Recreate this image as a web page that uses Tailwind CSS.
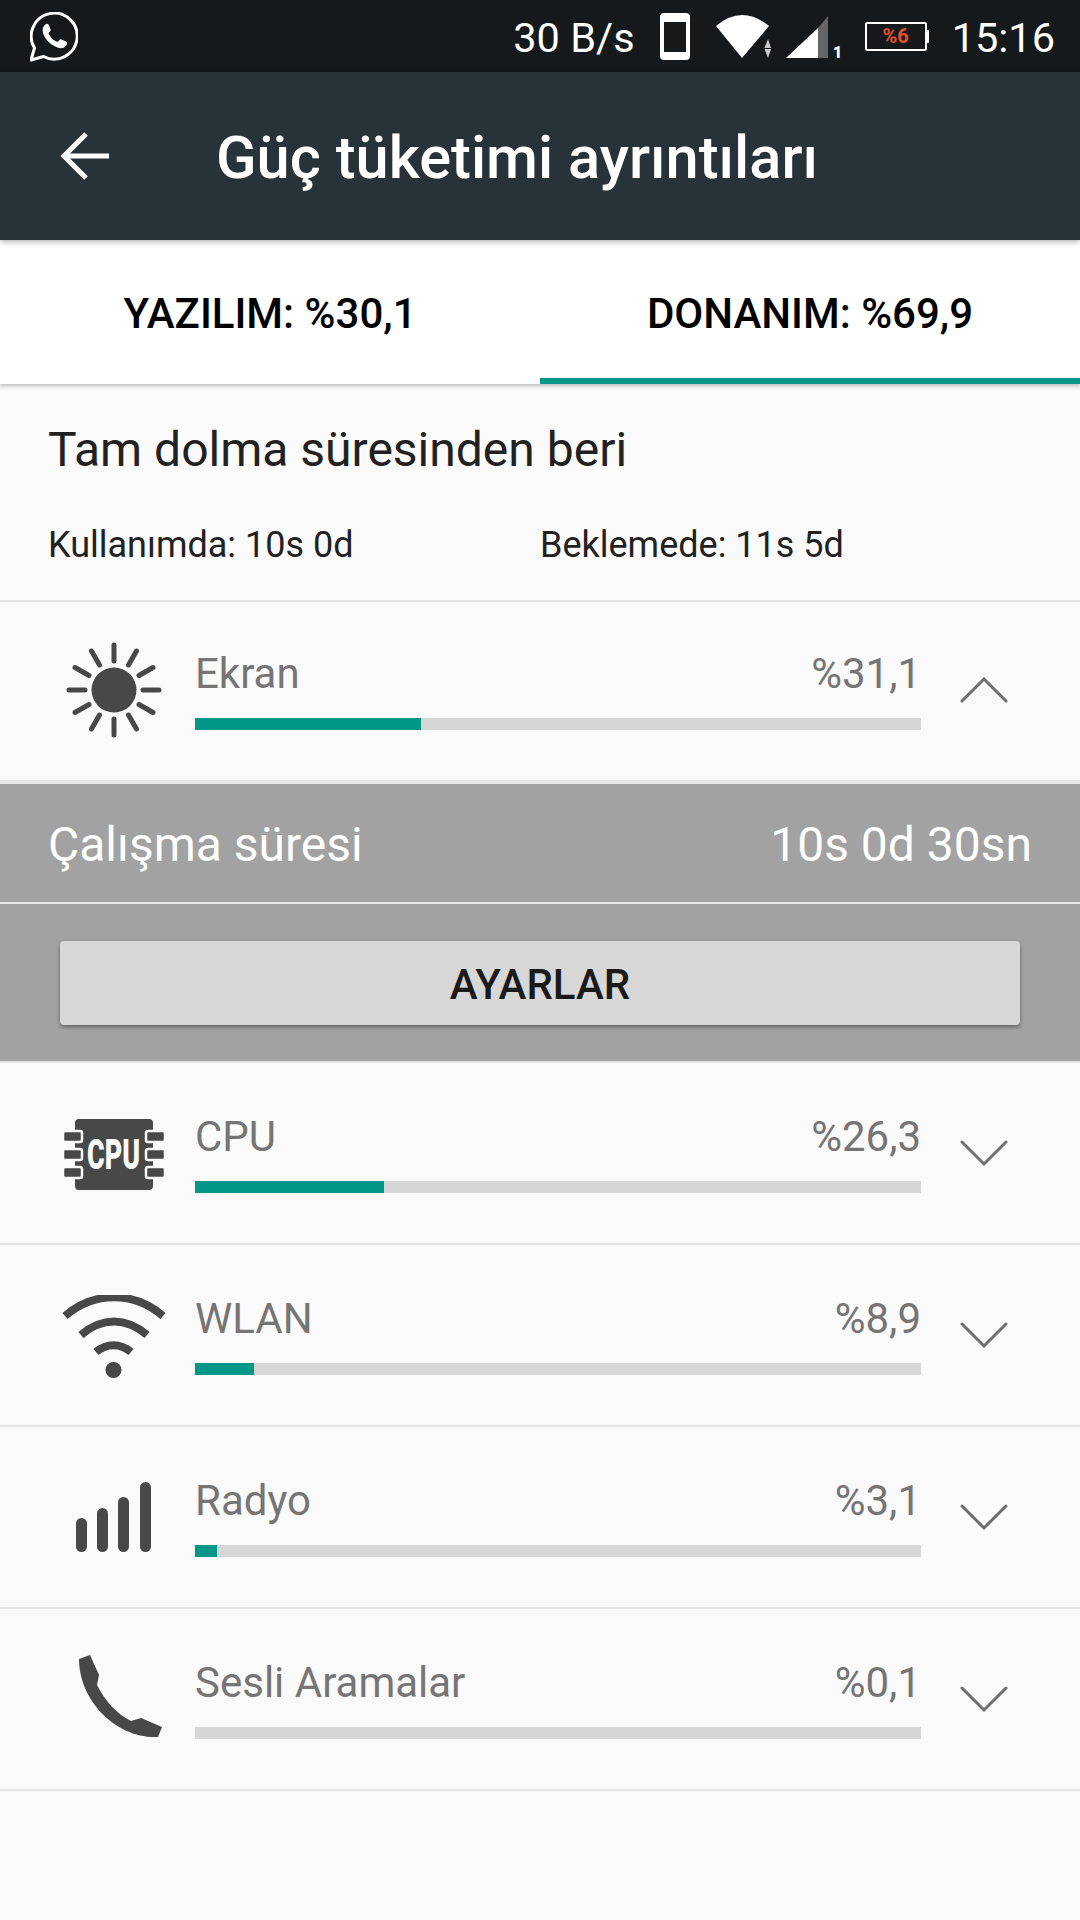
<!DOCTYPE html>
<html lang="en">
<head>
<meta charset="UTF-8" />
<meta name="viewport" content="width=device-width, initial-scale=1.0" />
<title>Güç tüketimi ayrıntıları</title>
<script src="https://cdn.jsdelivr.net/npm/@tailwindcss/browser@4"></script>
</head>
<body class="bg-[#fafafa] font-['Roboto',sans-serif]">
<div class="w-[1080px] h-[1920px] overflow-hidden flex flex-col">

  <!-- Status bar -->
  <div class="h-[72px] bg-[#15191c] flex items-center text-white shrink-0">
    <svg class="ml-[30px] mt-[2px] w-[48px] h-[50px]" viewBox="0 0 48 50">
      <path d="M1 48 L4.500 36 A23 23 0 1 1 13.500 44.500 Z" fill="none" stroke="#fff" stroke-width="3" stroke-linejoin="round"/>
      <path d="M16 12 C13 14 12 17 13 21 C15 28 22 34 29 36 C33 37 36 35 37 32 C37.500 30.500 37 30 36 29.500 L31.500 27.500 C30.500 27 30 27.500 29 28.500 C28 30 27 30 25.500 29 C22.500 27.500 20.500 25 19 22.500 C18.500 21.500 18.500 21 19.500 20 C20.500 19 21 18 20.500 17 L18.500 12.500 C18 11.500 17 11.500 16 12 Z" fill="#fff"/>
    </svg>
    <span class="ml-auto pt-[4px] text-[41.500px] leading-none font-normal">30 B/s</span>
    <svg class="ml-[25px] w-[30px] h-[47px]" viewBox="0 0 30 47">
      <rect x="2" y="2" width="26" height="43" rx="2" fill="none" stroke="#fff" stroke-width="4"/>
      <rect x="1" y="1" width="28" height="8" rx="2" fill="#fff"/>
      <rect x="1" y="39" width="28" height="7" rx="2" fill="#fff"/>
    </svg>
    <svg class="ml-[26px] mt-[1px] w-[55px] h-[43px]" viewBox="0 0 55 43">
      <path d="M0 11 Q26 -11 53 11 L26 43 Z" fill="#fff"/>
      <path d="M52 24 L48.500 33 H55 Z M52 43 L48.500 34 H55 Z" fill="#ccc"/>
    </svg>
    <svg class="ml-[15px] mt-[1px] w-[55px] h-[42px] overflow-visible" viewBox="0 0 55 42">
      <path d="M0 42 H32 V12 Z" fill="#fff"/>
      <path d="M32 42 H42 V0 L32 12 Z" fill="#666"/>
      <text x="47" y="42" font-family="Roboto" font-weight="900" font-size="16" fill="#fff">1</text>
    </svg>
    <div class="ml-[24px] relative w-[62px] h-[29px] border-2 border-white rounded-[2px] flex items-center justify-center">
      <span class="text-[#e8502a] text-[20px] leading-none font-bold">%6</span>
      <span class="absolute right-[-4px] top-[6px] w-[2px] h-[13px] bg-white"></span>
    </div>
    <span class="ml-[25px] mr-[25px] pt-[3px] text-[41.500px] leading-none font-normal">15:16</span>
  </div>

  <!-- App bar -->
  <div class="relative z-10 h-[168px] bg-[#283239] flex items-center text-white shrink-0 shadow-[0_2px_6px_rgba(0,0,0,0.3)]">
    <svg class="ml-[60px] w-[50px] h-[50px]" viewBox="0 0 50 50">
      <path d="M49 25 H4 M26 3 L4 25 L26 47" fill="none" stroke="#fff" stroke-width="5"/>
    </svg>
    <h1 class="ml-[106px] pt-[5px] text-[59.600px] leading-none font-medium">Güç tüketimi ayrıntıları</h1>
  </div>

  <!-- Tabs -->
  <div class="h-[144px] bg-white flex shrink-0 shadow-[0_2px_4px_rgba(0,0,0,0.25)]">
    <div class="w-[540px] flex items-center justify-center pt-[3px] text-[42px] font-medium text-black">YAZILIM: %30,1</div>
    <div class="w-[540px] flex items-center justify-center pt-[3px] text-[42px] font-medium text-black shadow-[inset_0_-6px_0_#009688]">DONANIM: %69,9</div>
  </div>

  <!-- Summary -->
  <div class="h-[218px] px-[48px] border-b-2 border-[#e4e4e4] shrink-0">
    <p class="pt-[38px] text-[48px] leading-[56px] text-[#212121]">Tam dolma süresinden beri</p>
    <div class="flex mt-[47px] text-[36px] leading-[40px] text-[#212121]">
      <span class="w-[492px]">Kullanımda: 10s 0d</span>
      <span>Beklemede: 11s 5d</span>
    </div>
  </div>

  <!-- Ekran -->
  <div class="h-[178px] flex shrink-0">
    <div class="w-[195px]">
      <svg class="w-[96px] h-[96px] ml-[66px] mt-[40px]" viewBox="0 0 96 96" stroke="#484848" stroke-width="5" stroke-linecap="round">
        <circle cx="48" cy="48" r="22.500" fill="#484848" stroke="none"/>
        <path d="M48 3 V19 M48 77 V93 M3 48 H19 M77 48 H93 M25.500 9 L33.500 23 M70.500 9 L62.500 23 M25.500 87 L33.500 73 M70.500 87 L62.500 73 M9 25.500 L23 33.500 M87 25.500 L73 33.500 M9 70.500 L23 62.500 M87 70.500 L73 62.500"/>
      </svg>
    </div>
    <div class="w-[726px] pt-[47px]">
      <div class="flex justify-between text-[42px] leading-[50px] text-[#757575]"><span>Ekran</span><span>%31,1</span></div>
      <div class="mt-[19px] h-[12px] bg-[#d6d6d6]"><div class="h-full bg-[#009688]" style="width:31.100%"></div></div>
    </div>
    <div class="pl-[39px] pt-[74px]">
      <svg class="w-[48px] h-[28px]" viewBox="0 0 48 28"><path d="M2 25 L24 3 L46 25" fill="none" stroke="#6e6e6e" stroke-width="3" stroke-linecap="round"/></svg>
    </div>
  </div>
  <div class="h-[4px] bg-[#e8e8e8] shrink-0"></div>

  <!-- Expanded detail -->
  <div class="h-[277px] bg-[#a2a2a2] shrink-0">
    <div class="h-[120px] px-[48px] pt-[3px] flex items-center justify-between text-[48px] text-white border-b-2 border-[#e8e8e8]">
      <span>Çalışma süresi</span><span>10s 0d 30sn</span>
    </div>
    <div class="px-[60px] pt-[37px]">
      <div class="h-[84px] pt-[2px] bg-[#d6d7d6] rounded-[4px] shadow-[0_2px_4px_rgba(0,0,0,0.4)] flex items-center justify-center text-[42px] font-medium text-[#1a1a1a]">AYARLAR</div>
    </div>
  </div>

  <!-- CPU -->
  <div class="h-[184px] flex shrink-0 border-t-2 border-b-2 border-[#e4e4e4]">
    <div class="w-[195px]">
      <svg class="w-[98px] h-[71px] ml-[65px] mt-[56px] overflow-visible" viewBox="0 0 98 71">
        <rect x="10" y="0" width="78" height="71" rx="4" fill="#484848"/>
        <g fill="#484848" stroke="#fafafa" stroke-width="2.500">
          <rect x="-2" y="12" width="19" height="11" rx="2"/><rect x="-2" y="30" width="19" height="11" rx="2"/><rect x="-2" y="48" width="19" height="11" rx="2"/>
          <rect x="81" y="12" width="19" height="11" rx="2"/><rect x="81" y="30" width="19" height="11" rx="2"/><rect x="81" y="48" width="19" height="11" rx="2"/>
        </g>
        <text x="48.500" y="50" text-anchor="middle" font-family="Roboto" font-weight="900" font-size="43" textLength="53" lengthAdjust="spacingAndGlyphs" fill="#fafafa">CPU</text>
      </svg>
    </div>
    <div class="w-[726px] pt-[49px]">
      <div class="flex justify-between text-[42px] leading-[50px] text-[#757575]"><span>CPU</span><span>%26,3</span></div>
      <div class="mt-[19px] h-[12px] bg-[#d6d6d6]"><div class="h-full bg-[#009688]" style="width:26%"></div></div>
    </div>
    <div class="pl-[39px] pt-[76px]">
      <svg class="w-[48px] h-[28px]" viewBox="0 0 48 28"><path d="M2 3 L24 25 L46 3" fill="none" stroke="#6e6e6e" stroke-width="3" stroke-linecap="round"/></svg>
    </div>
  </div>

  <!-- WLAN -->
  <div class="h-[182px] flex shrink-0 border-b-2 border-[#e4e4e4]">
    <div class="w-[195px]">
      <svg class="w-[104px] h-[84px] ml-[62px] mt-[50px]" viewBox="0 0 104 84" fill="none" stroke="#484848" stroke-width="8">
        <path d="M3 21 C32 -4 72 -4 101 21"/>
        <path d="M19 40 C40 22 64 22 85 40"/>
        <path d="M34 57 C45 48 58 48 69 57"/>
        <circle cx="51.500" cy="75" r="8" fill="#484848" stroke="none"/>
      </svg>
    </div>
    <div class="w-[726px] pt-[49px]">
      <div class="flex justify-between text-[42px] leading-[50px] text-[#757575]"><span>WLAN</span><span>%8,9</span></div>
      <div class="mt-[19px] h-[12px] bg-[#d6d6d6]"><div class="h-full bg-[#009688]" style="width:8.100%"></div></div>
    </div>
    <div class="pl-[39px] pt-[76px]">
      <svg class="w-[48px] h-[28px]" viewBox="0 0 48 28"><path d="M2 3 L24 25 L46 3" fill="none" stroke="#6e6e6e" stroke-width="3" stroke-linecap="round"/></svg>
    </div>
  </div>

  <!-- Radyo -->
  <div class="h-[182px] flex shrink-0 border-b-2 border-[#e4e4e4]">
    <div class="w-[195px]">
      <svg class="w-[75px] h-[70px] ml-[76px] mt-[55px]" viewBox="0 0 75 70" fill="#484848">
        <rect x="0" y="36" width="11" height="34" rx="5.500"/>
        <rect x="21" y="26" width="11" height="44" rx="5.500"/>
        <rect x="42" y="15" width="11" height="55" rx="5.500"/>
        <rect x="64" y="0" width="11" height="70" rx="5.500"/>
      </svg>
    </div>
    <div class="w-[726px] pt-[49px]">
      <div class="flex justify-between text-[42px] leading-[50px] text-[#757575]"><span>Radyo</span><span>%3,1</span></div>
      <div class="mt-[19px] h-[12px] bg-[#d6d6d6]"><div class="h-full bg-[#009688]" style="width:3%"></div></div>
    </div>
    <div class="pl-[39px] pt-[76px]">
      <svg class="w-[48px] h-[28px]" viewBox="0 0 48 28"><path d="M2 3 L24 25 L46 3" fill="none" stroke="#6e6e6e" stroke-width="3" stroke-linecap="round"/></svg>
    </div>
  </div>

  <!-- Sesli Aramalar -->
  <div class="h-[182px] flex shrink-0 border-b-2 border-[#e4e4e4]">
    <div class="w-[195px]">
      <svg class="w-[84px] h-[84px] ml-[79px] mt-[46px]" viewBox="0 0 84 84" fill="#484848">
        <path d="M0 4 L11 0 L20 20 L18 30 C26 46 38 59 52 66 L62 63 L83 72 L79 82 C38 84 0 46 0 4 Z"/>
      </svg>
    </div>
    <div class="w-[726px] pt-[49px]">
      <div class="flex justify-between text-[42px] leading-[50px] text-[#757575]"><span>Sesli Aramalar</span><span>%0,1</span></div>
      <div class="mt-[19px] h-[12px] bg-[#d6d6d6]"></div>
    </div>
    <div class="pl-[39px] pt-[76px]">
      <svg class="w-[48px] h-[28px]" viewBox="0 0 48 28"><path d="M2 3 L24 25 L46 3" fill="none" stroke="#6e6e6e" stroke-width="3" stroke-linecap="round"/></svg>
    </div>
  </div>

</div>
</body>
</html>
